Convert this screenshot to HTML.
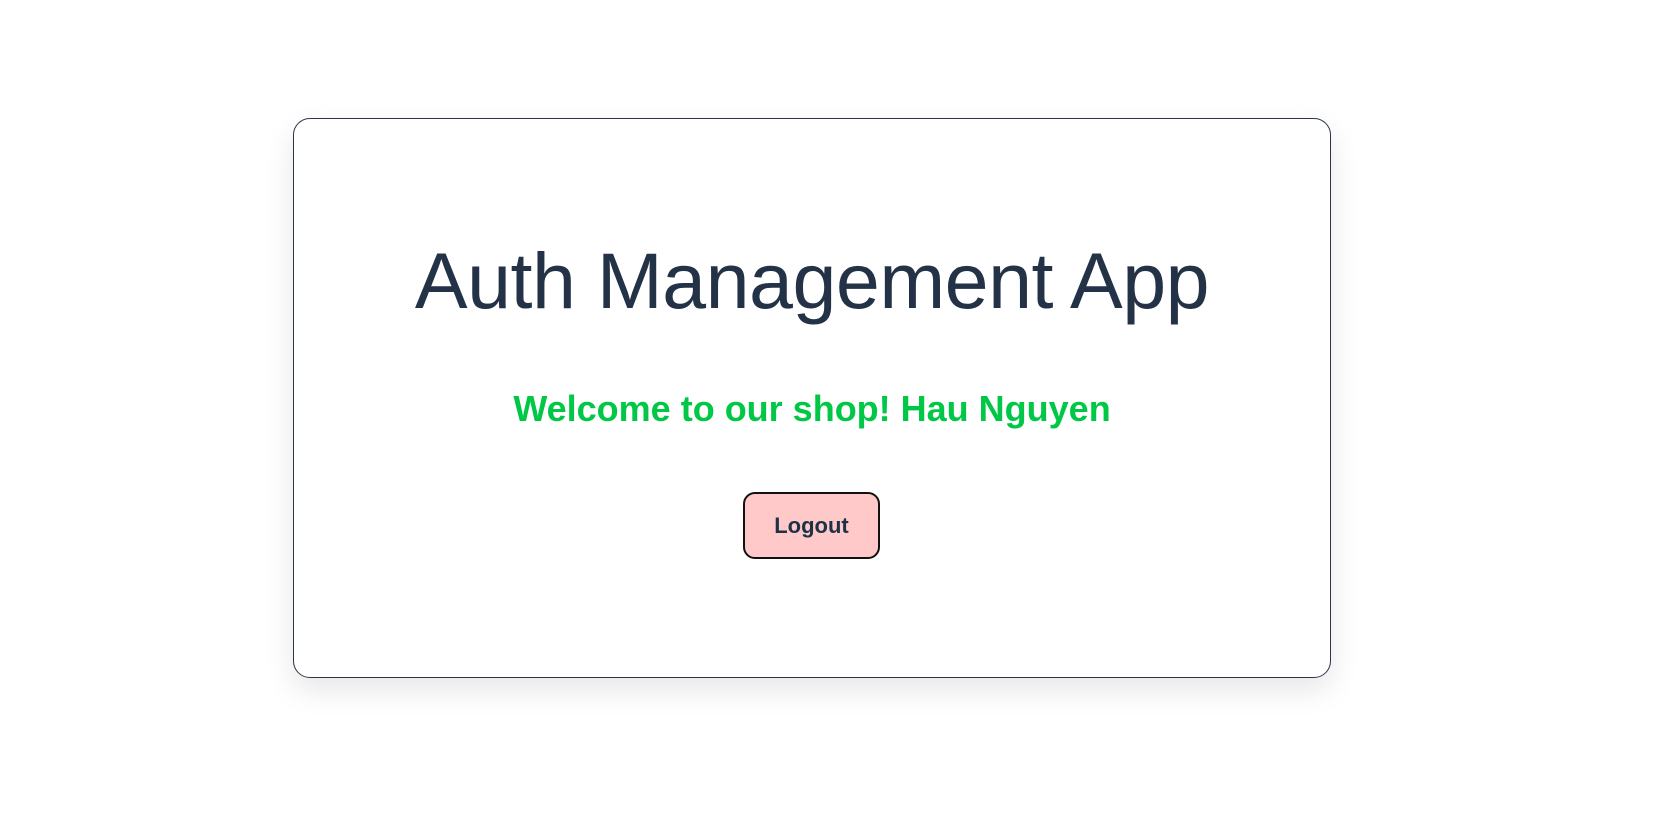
<!DOCTYPE html>
<html><head><style>
html,body{margin:0;padding:0;background:#fff;width:1657px;height:817px;overflow:hidden;font-family:"Liberation Sans",sans-serif}
.card{position:absolute;left:293px;top:118px;width:1036px;height:558px;border:1px solid #2a3547;border-radius:17px;box-shadow:0 12px 30px rgba(0,0,0,0.10);background:#fff}
h1{position:absolute;left:0;right:0;top:122px;margin:0;text-align:center;font-weight:normal;font-size:79px;line-height:1;color:#233246;letter-spacing:-0.5px}
.w{position:absolute;left:0;right:0;top:272px;margin:0;text-align:center;font-weight:bold;font-size:36px;line-height:1;color:#00c846}
.b{position:absolute;left:449px;top:373px;width:137px;height:67px;box-sizing:border-box;border:2px solid #111;border-radius:12px;background:#ffc9c9;color:#1e3246;font-weight:bold;font-size:22px;text-align:center;line-height:63px}
</style></head><body>
<div class="card">
<h1>Auth Management App</h1>
<div class="w">Welcome to our shop! Hau Nguyen</div>
<div class="b">Logout</div>
</div>
</body></html>
